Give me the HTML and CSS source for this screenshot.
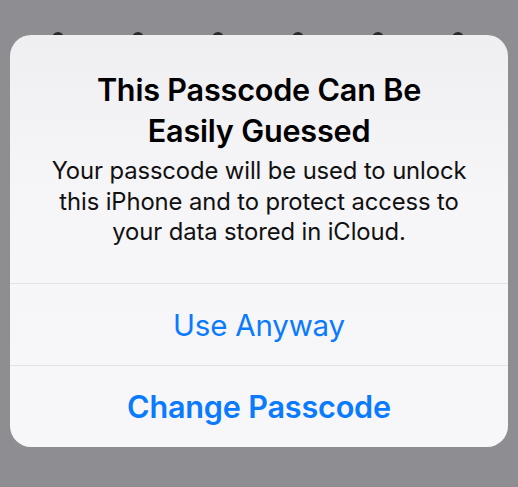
FILE: index.html
```html
<!DOCTYPE html>
<html>
<head>
<meta charset="utf-8">
<link rel="stylesheet" href="styles.css">
</head>
<body>
<div class="screen">
  <div class="dots">
    <span class="dot"></span><span class="dot"></span><span class="dot"></span>
    <span class="dot"></span><span class="dot"></span><span class="dot"></span>
  </div>
  <div class="alert">
    <div class="content">
      <div class="title">This Passcode Can Be<br>Easily Guessed</div>
      <div class="message">Your passcode will be used to unlock<br>this iPhone and to protect access to<br>your data stored in iCloud.</div>
    </div>
    <div class="action">Use Anyway</div>
    <div class="action preferred">Change Passcode</div>
  </div>
</div>
</body>
</html>
```
FILE: styles.css
```css
html, body {
  margin: 0;
  padding: 0;
  background: #8e8d91;
  width: 518px;
  height: 487px;
  overflow: hidden;
  font-family: Inter, "Noto Sans", sans-serif;
}
.screen {
  position: relative;
  padding: 35px 10px 0 10px;
}
.dots {
  position: absolute;
  top: 32px;
  left: 0;
  width: 518px;
}
.dot {
  position: absolute;
  width: 12px;
  height: 12px;
  border-radius: 50%;
  background: #2a2a2c;
}
.dot:nth-child(1) { left: 52px; }
.dot:nth-child(2) { left: 132px; }
.dot:nth-child(3) { left: 212px; }
.dot:nth-child(4) { left: 292px; }
.dot:nth-child(5) { left: 372px; }
.dot:nth-child(6) { left: 452px; }
.alert {
  position: relative;
  width: 498px;
  height: 412px;
  border-radius: 21px;
  background: linear-gradient(180deg, #efeef1 0%, #f6f5f8 40%, #f7f7fa 100%);
  overflow: hidden;
  display: flex;
  flex-direction: column;
}
.content {
  height: 248px;
  box-sizing: border-box;
  padding-top: 34px;
  text-align: center;
  color: #000;
}
.title {
  font-size: 30.6px;
  font-weight: 600;
  line-height: 41px;
  letter-spacing: -0.2px;
}
.message {
  font-size: 23.8px;
  line-height: 30.5px;
  margin-top: 5px;
  color: #111;
  letter-spacing: -0.1px;
}
.action {
  height: 81px;
  border-top: 1px solid #e3e2e6;
  display: flex;
  align-items: center;
  justify-content: center;
  color: #0a7aff;
  font-size: 29.5px;
  letter-spacing: -0.2px;
}
.action.preferred {
  font-weight: 600;
  font-size: 30.6px;
}
```
